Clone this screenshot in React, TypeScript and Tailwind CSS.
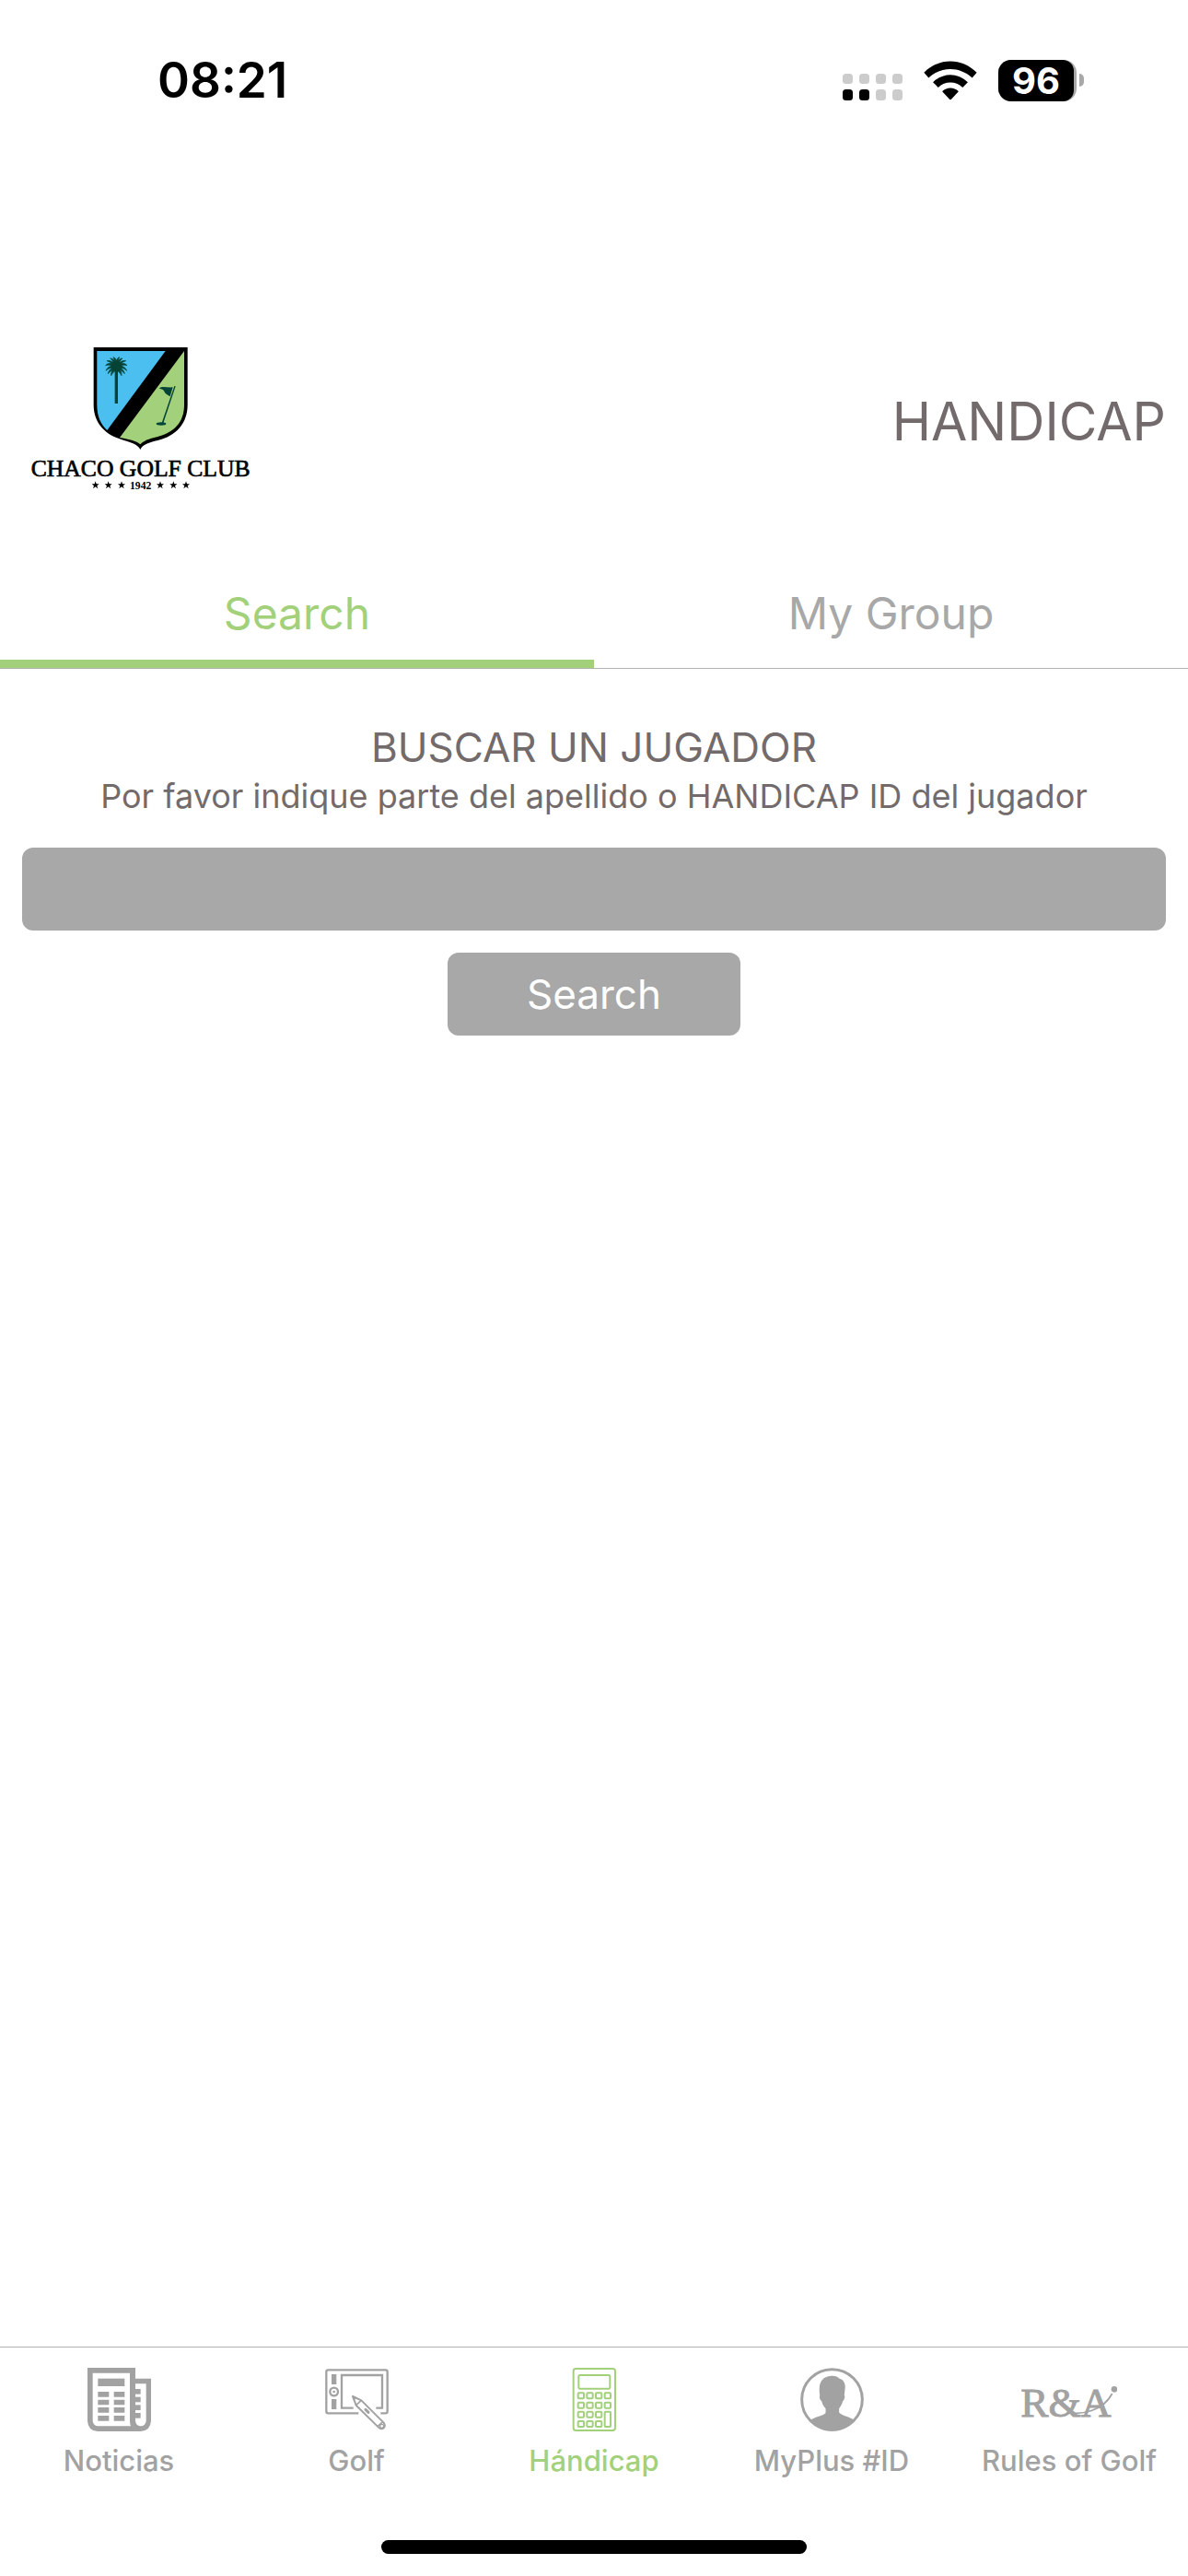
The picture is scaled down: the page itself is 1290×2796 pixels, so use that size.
import { useState, type ReactNode } from "react";

function SignalIcon() {
  const columns = [0, 18, 36, 54];
  return (
    <svg viewBox="0 0 65 29" className="mt-[14px] h-[29px] w-[65px]" aria-hidden="true">
      {columns.map((x, i) => (
        <g key={x}>
          <rect x={x} y="0" width="11" height="11" rx="3.5" fill="#cccccc" />
          <rect x={x} y="17" width="11" height="12" rx="3.5" fill={i < 2 ? "#000" : "#cccccc"} />
        </g>
      ))}
    </svg>
  );
}

function WifiIcon() {
  return (
    <svg viewBox="341 44 173 128" className="h-[43px] w-[58px]" aria-hidden="true">
      <path d="M342 82C391 33 464 33 513 82L498 99C457 61 398 61 357 99Z" />
      <path d="M371 113C404 81 451 81 484 113L467 130C445 109 410 109 388 130Z" />
      <path d="M401 143C416 128 439 128 454 143L431 168Q427.500 172 424 168Z" />
    </svg>
  );
}

function Battery() {
  return (
    <div className="flex items-center gap-[3px]">
      <div className="rounded-[14px] bg-[#a8a8a8] pr-[3px]">
        <div className="flex h-[45px] w-[82px] items-center justify-center rounded-l-[14px] rounded-r-[12px] bg-black text-[40px] leading-[45px] font-bold text-white">
          96
        </div>
      </div>
      <div className="h-[14px] w-[5px] rounded-r-full bg-[#a8a8a8]" />
    </div>
  );
}

const FRONDS = [
  "M319 112C312 100 300 92 288 95C298 97 309 106 316 116Z",
  "M318 112C307 101 293 100 284 110C296 106 309 110 317 119Z",
  "M319 114C305 108 290 113 285 127C296 117 310 115 318 122Z",
  "M319 117C305 115 294 124 292 137C301 126 311 122 320 123Z",
  "M319 117C308 120 301 130 302 143C308 133 314 127 321 124Z",
  "M318 114C318 98 311 87 299 87C307 93 313 103 315 116Z",
  "M318 115C322 99 319 86 309 83C314 91 315 105 316 117Z",
];

function ClubLogo() {
  return (
    <svg
      viewBox="12 30 780 510"
      className="h-[170px] w-[260px]"
      role="img"
      aria-label="Chaco Golf Club 1942"
    >
      <path d="M245 51H551V238C551 300 513 340 454 354C425 361 405 367 397 384C389 367 369 361 342 353C285 338 245 300 245 238Z" />
      <path d="M256 63H479L289 321C268 302 256 276 256 238Z" fill="#4bbff0" />
      <path
        d="M540 63V238C540 297 506 329 451 343C425 349 407 356 397 367C386 356 356 349 330 345Z"
        fill="#a3d17b"
      />
      <g fill="#064437">
        <rect x="314" y="116" width="10" height="118" />
        <ellipse cx="319" cy="112" rx="18" ry="17" />
        {FRONDS.map((d) => (
          <path key={d} d={d} stroke="#064437" strokeWidth="2" />
        ))}
        <g transform="matrix(-1 0 0 1 638 0)">
          {FRONDS.map((d) => (
            <path key={d} d={d} stroke="#064437" strokeWidth="2" />
          ))}
        </g>
        <path d="M508 177L512 178L472 298L467 297Z" />
        <path d="M458 184C470 176 484 183 503 181L494 211C485 206 477 203 474 193C470 186 464 188 458 184Z" />
        <ellipse cx="465" cy="300" rx="16" ry="5" />
      </g>
      <text
        x="398"
        y="470"
        textAnchor="middle"
        fontSize="77"
        stroke="#000"
        strokeWidth="2"
        className="font-['Liberation_Serif',serif]"
      >
        CHACO GOLF CLUB
      </text>
      <text
        x="398"
        y="512"
        textAnchor="middle"
        fontSize="35"
        className="font-['Liberation_Serif',serif] font-bold"
      >
        1942
      </text>
      {[251, 293, 336, 462, 505, 546].map((x) => (
        <path
          key={x}
          transform={`translate(${x} 500)`}
          d="M0-13L3-4H12L5 2L8 11L0 5L-8 11L-5 2L-12-4H-3Z"
        />
      ))}
    </svg>
  );
}

function NewsIcon() {
  return (
    <svg viewBox="162 117 207 207" className="size-[69px]" fill="currentColor" aria-hidden="true">
      <path
        fillRule="evenodd"
        d="M162 117H318V152H369V290Q367 322 335 324H195Q164 322 162 290ZM179 134V290Q181 306 197 307H303Q300 300 300 290V134ZM318 169V290Q320 306 335 307Q351 306 353 290V169Z"
      />
      <path d="M196 152H283V177H196Z" />
      {[195, 221, 246, 273].map((y) => (
        <path key={y} d={`M196 ${y}h36v17h-36zM248 ${y}h35v17h-35z`} />
      ))}
      {[186, 212, 238, 264].map((y) => (
        <path key={y} d={`M317 ${y}h18v17h-18z`} />
      ))}
    </svg>
  );
}

function TabletIcon() {
  return (
    <svg
      viewBox="936 117 207 207"
      className="size-[69px]"
      fill="none"
      stroke="currentColor"
      aria-hidden="true"
    >
      <path
        strokeWidth="7"
        d="M1045 265H946Q940 265 940 259V130Q940 124 946 124H1133Q1139 124 1139 130V259Q1139 265 1133 265H1117"
      />
      <path strokeWidth="7" d="M1028 248H990V141H1122V248H1102" />
      <path fill="currentColor" stroke="none" d="M957 138h16v33h-16zM957 219h16v33h-16z" />
      <circle cx="965" cy="195" r="13" strokeWidth="7" />
      <circle cx="965" cy="195" r="4" fill="currentColor" stroke="none" />
      <path
        strokeWidth="6"
        strokeLinejoin="round"
        d="M1026 210L1054 223L1127 296Q1134 306 1127 313Q1118 319 1110 311L1037 239Z"
      />
      <path strokeWidth="5" d="M1054 223L1037 239M1124 293L1107 308" />
      <path fill="currentColor" stroke="none" d="M1023 207L1039 214L1030 224Z" />
      <circle cx="1121" cy="307" r="6" strokeWidth="4" />
      <path strokeWidth="9" strokeLinecap="round" d="M1068 253L1077 262" />
    </svg>
  );
}

function CalculatorIcon() {
  return (
    <svg
      viewBox="180 117 207 207"
      className="size-[69px]"
      fill="none"
      stroke="currentColor"
      strokeWidth="6"
      aria-hidden="true"
    >
      <rect x="215" y="120" width="136" height="201" rx="8" />
      <rect x="232" y="141" width="102" height="44" rx="4" />
      {[199, 230, 260, 291].map((y, row) =>
        [230, 259, 288, 317].map((x, col) =>
          col === 3 && row > 1 ? null : (
            <rect key={`${x}-${y}`} x={x} y={y} width="19" height="18" rx="3" />
          ),
        ),
      )}
      <rect x="317" y="260" width="19" height="49" rx="3" />
    </svg>
  );
}

function ProfileIcon() {
  return (
    <svg viewBox="951 117 208 207" className="size-[69px]" aria-hidden="true">
      <circle cx="1055" cy="220.500" r="99" fill="none" stroke="currentColor" strokeWidth="9" />
      <path
        fill="currentColor"
        d="M1055 143C1067 143 1074 146 1079 152C1091 154 1098 166 1098 180L1095 207C1099 210 1095 222 1090 226C1087 238 1082 245 1078 250V263C1088 274 1110 276 1126 287C1108 313 1084 324 1055 324C1026 324 1002 313 985 287C1000 276 1024 275 1034 264V250C1028 244 1023 236 1021 226C1015 222 1012 211 1015 207C1012 180 1011 145 1055 143Z"
      />
    </svg>
  );
}

function RulesIcon() {
  return (
    <svg
      viewBox="204 117 312 207"
      className="h-[69px] w-[104px]"
      fill="currentColor"
      role="img"
      aria-label="R&A"
    >
      <text
        x="202"
        y="276"
        fontSize="136"
        stroke="currentColor"
        strokeWidth="3"
        className="font-['Liberation_Serif',serif]"
      >
        R&amp;A
      </text>
      <path
        fill="none"
        stroke="currentColor"
        strokeWidth="5"
        d="M352 262C400 272 470 258 500 201"
      />
      <circle cx="507" cy="187" r="10" />
    </svg>
  );
}

const TABS = ["Search", "My Group"];

const NAV: { label: string; icon: ReactNode }[] = [
  { label: "Noticias", icon: <NewsIcon /> },
  { label: "Golf", icon: <TabletIcon /> },
  { label: "Hándicap", icon: <CalculatorIcon /> },
  { label: "MyPlus #ID", icon: <ProfileIcon /> },
  { label: "Rules of Golf", icon: <RulesIcon /> },
];

export default function App() {
  const [tab, setTab] = useState("Search");
  const [page, setPage] = useState("Hándicap");

  return (
    <div className="flex min-h-screen flex-col bg-white font-[Inter,sans-serif] text-[#736b6b]">
      <div className="flex h-[174px] items-center justify-between pr-[113px] pl-[171px] text-black">
        <time className="text-[53px] leading-none font-semibold">08:21</time>
        <div className="flex items-center gap-[23px]">
          <SignalIcon />
          <WifiIcon />
          <Battery />
        </div>
      </div>

      <header className="flex items-center justify-between px-6 pt-[196px] pb-[66px]">
        <ClubLogo />
        <h1 className="pt-1 text-[57px] leading-none font-normal">HANDICAP</h1>
      </header>

      <div role="tablist" className="flex border-b border-[#b2b2b2]">
        {TABS.map((name) => (
          <button
            key={name}
            type="button"
            role="tab"
            aria-selected={tab === name}
            onClick={() => setTab(name)}
            className={`h-[119px] flex-1 border-b-9 pt-2.5 text-[48px] ${
              tab === name
                ? "border-[#a3d17b] text-[#a3d17b]"
                : "border-transparent text-[#a8a8a8]"
            }`}
          >
            {name}
          </button>
        ))}
      </div>

      <main className="flex-1 px-6 pt-[58px]">
        <form className="flex flex-col items-center" onSubmit={(e) => e.preventDefault()}>
          <h2 className="text-[44px] leading-[54px]">BUSCAR UN JUGADOR</h2>
          <label htmlFor="player" className="text-[36px] leading-[52px]">
            Por favor indique parte del apellido o HANDICAP ID del jugador
          </label>
          <input
            id="player"
            type="text"
            className="mt-[30px] h-[90px] w-full rounded-xl bg-[#a8a8a8] px-6 text-[44px] text-white outline-none"
          />
          <button
            type="submit"
            className="mt-6 h-[90px] w-[318px] rounded-xl bg-[#a8a8a8] text-[44px] text-white"
          >
            Search
          </button>
        </form>
      </main>

      <nav className="grid grid-cols-5 border-t border-[#b2b2b2] pt-[22px]">
        {NAV.map(({ label, icon }) => (
          <button
            key={label}
            type="button"
            onClick={() => setPage(label)}
            aria-current={page === label ? "page" : undefined}
            className={`flex flex-col items-center gap-3 text-[31px] leading-10 font-medium ${
              page === label ? "text-[#a3d17b]" : "text-[#a2a2a2]"
            }`}
          >
            {icon}
            <span>{label}</span>
          </button>
        ))}
      </nav>
      <div className="mx-auto mt-[66px] mb-6 h-[15px] w-[462px] rounded-full bg-black" />
    </div>
  );
}
